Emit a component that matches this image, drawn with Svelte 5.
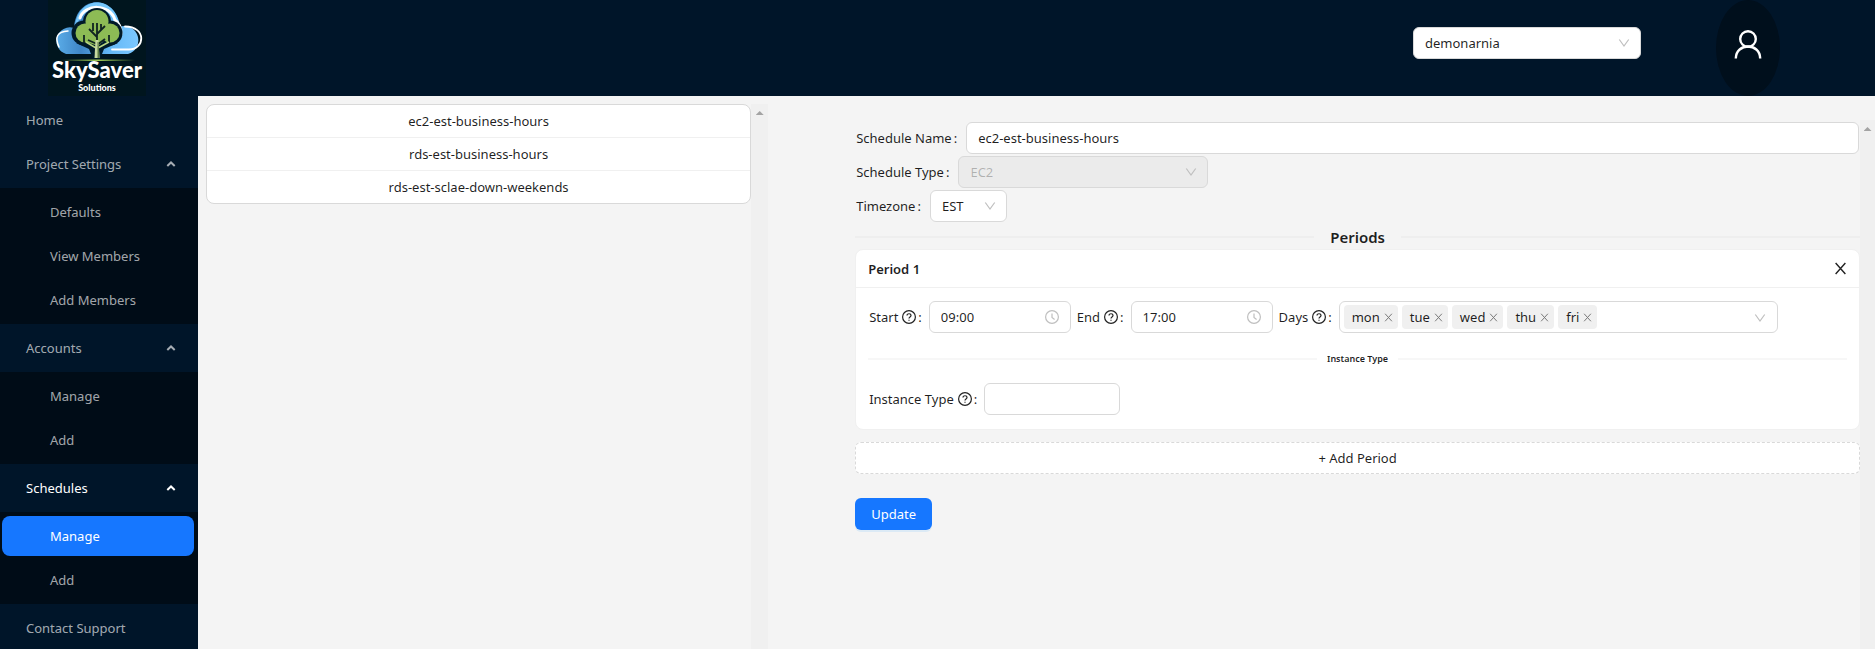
<script lang="ts">
	interface MenuItem {
		label: string;
		active?: boolean;
		children?: { label: string; active?: boolean }[];
	}

	const menu: MenuItem[] = [
		{ label: 'Home' },
		{
			label: 'Project Settings',
			children: [{ label: 'Defaults' }, { label: 'View Members' }, { label: 'Add Members' }]
		},
		{ label: 'Accounts', children: [{ label: 'Manage' }, { label: 'Add' }] },
		{
			label: 'Schedules',
			active: true,
			children: [{ label: 'Manage', active: true }, { label: 'Add' }]
		},
		{ label: 'Contact Support' }
	];

	const schedules = ['ec2-est-business-hours', 'rds-est-business-hours', 'rds-est-sclae-down-weekends'];

	let name = $state('ec2-est-business-hours');
	let start = $state('09:00');
	let end = $state('17:00');
	let instanceType = $state('');
	let days = $state(['mon', 'tue', 'wed', 'thu', 'fri']);

	function removeDay(day: string) {
		days = days.filter((d) => d !== day);
	}
</script>

{#snippet chevron()}
	<svg class="chevron" viewBox="0 0 12 12" aria-hidden="true"><path d="M1.3 2.5 6 9l4.7-6.5" /></svg>
{/snippet}

{#snippet help()}
	<svg class="help" viewBox="0 0 14 14" aria-hidden="true">
		<circle cx="7" cy="7" r="6.4" />
		<path d="M5 5.6c0-2.5 4-2.5 4 0 0 1.4-2 1.4-2 2.8" />
		<path d="M7 9.7v1.1" />
	</svg>
{/snippet}

{#snippet clock()}
	<svg class="clock" viewBox="0 0 14 14" aria-hidden="true">
		<circle cx="7" cy="7" r="6.4" />
		<path d="M7 3.5v4l2.6 1.9" />
	</svg>
{/snippet}

{#snippet cross()}
	<svg viewBox="0 0 12 12" aria-hidden="true"><path d="m1.5 1 9 10m0-10-9 10" /></svg>
{/snippet}

<div class="layout">
	<header>
		<a class="logo" href="#home" aria-label="SkySaver Solutions">
			<svg viewBox="0 0 98 96">
				<defs>
					<linearGradient id="sky" x1="0" y1="0" x2="1" y2="0">
						<stop offset="0" stop-color="#5aace8" />
						<stop offset="0.3" stop-color="#3f86c6" />
						<stop offset="0.65" stop-color="#64b8f6" />
						<stop offset="1" stop-color="#7cc8ff" />
					</linearGradient>
					<linearGradient id="ground" x1="0" y1="0" x2="1" y2="0">
						<stop offset="0" stop-color="#8fbe4e" stop-opacity="0" />
						<stop offset="0.5" stop-color="#a5cf57" />
						<stop offset="1" stop-color="#8fbe4e" stop-opacity="0" />
					</linearGradient>
				</defs>
				<rect width="98" height="96" fill="#00151e" />
				<path fill="url(#sky)" d="M18 54A13.5 13.5 0 1 1 26 28C28-6 68-6 72 26.5A14.3 14.3 0 1 1 80 54z" />
				<path fill="#74c6fb" d="M27 25C31-5 67-5 71 25L60 12H38z" />
				<g fill="none" stroke="#fff" stroke-linecap="round">
					<path stroke-width="1.5" d="M11 47q-7-15 9-16" />
					<path stroke-width="3" d="M32 18C36 4 62 3 67 20q6 4 6 14" />
					<path stroke-width="1.8" d="M77 26.5c22 0 20 23 4 23H64" />
				</g>
				<!-- outline behind the crown -->
				<g fill="#001a29">
					<circle cx="49" cy="22" r="14" />
					<circle cx="36" cy="33" r="12.5" />
					<circle cx="62" cy="33" r="12.5" />
					<path d="M28 43h42l-14 6-4 10h-7l-4-10z" />
				</g>
				<g fill="#8dbb55">
					<circle cx="49" cy="21.5" r="11.5" />
					<circle cx="37" cy="33" r="9.5" />
					<circle cx="62" cy="33" r="9.5" />
					<path d="M40 27h20v10l-10 9-12-4z" />
				</g>
				<g fill="none" stroke="#102421" stroke-width="1.8">
					<path d="M49 45V23m0 14-8-8m8 5 8-8M45 31v-8m8 7v-6M36 43v-8m25 8v-8M49 44l-9-4m9 5 8-6" />
				</g>
				<path fill="none" stroke="#bbd783" stroke-width="1.5" d="m38 42 10 6m13-6-11 6" />
				<path fill="#c6d8a0" d="M47.5 40h3l1 18h-5z" />
				<path fill="#5b7a42" d="M49.5 42h1l1 16h-2z" />
				<rect x="13" y="59.5" width="74" height="1.5" fill="url(#ground)" />
				<text class="brand" x="49" y="78" text-anchor="middle">SkySaver</text>
				<text class="tagline" x="49" y="91" text-anchor="middle">Solutions</text>
			</svg>
		</a>
		<div class="select project">
			<select aria-label="Project"><option>demonarnia</option></select>
			{@render chevron()}
		</div>
		<button class="avatar" aria-label="Account">
			<svg viewBox="0 0 32 32" aria-hidden="true">
				<circle cx="16" cy="10" r="7.8" />
				<path d="M3.8 29.5C4 13.5 28 13.5 28.2 29.5" />
			</svg>
		</button>
	</header>

	<nav>
		<ul class="menu">
			{#each menu as item}
				<li>
					{#if item.children}
						<button class="item" class:parent-active={item.active}>
							{item.label}
							<svg viewBox="0 0 10 6" aria-hidden="true"><path d="m1.3 5 3.7-3.5L8.7 5" /></svg>
						</button>
						<ul class="submenu">
							{#each item.children as child}
								<li><a class="item" class:active={child.active} href="#menu">{child.label}</a></li>
							{/each}
						</ul>
					{:else}
						<a class="item" href="#menu">{item.label}</a>
					{/if}
				</li>
			{/each}
		</ul>
	</nav>

	<main>
		<section class="list-pane">
			<ul class="schedules">
				{#each schedules as schedule}
					<li>{schedule}</li>
				{/each}
			</ul>
			<div class="scrollbar"></div>
		</section>

		<section class="form-pane">
			<form onsubmit={(e) => e.preventDefault()}>
				<div class="row">
					<label for="name">Schedule Name<span class="colon">:</span></label>
					<input id="name" class="grow" type="text" bind:value={name} />
				</div>
				<div class="row">
					<label for="type">Schedule Type<span class="colon">:</span></label>
					<div class="select type">
						<select id="type" disabled><option>EC2</option></select>
						{@render chevron()}
					</div>
				</div>
				<div class="row">
					<label for="timezone">Timezone<span class="colon">:</span></label>
					<div class="select timezone">
						<select id="timezone"><option>EST</option></select>
						{@render chevron()}
					</div>
				</div>

				<h2 class="divider">Periods</h2>

				<div class="card">
					<div class="card-head">
						<h3>Period 1</h3>
						<button class="close" type="button" aria-label="Remove period">{@render cross()}</button>
					</div>
					<div class="card-body">
						<div class="fields">
							<div class="field">
								<label for="start">Start {@render help()}<span class="colon">:</span></label>
								<div class="time">
									<input id="start" type="text" bind:value={start} />
									{@render clock()}
								</div>
							</div>
							<div class="field">
								<label for="end">End {@render help()}<span class="colon">:</span></label>
								<div class="time">
									<input id="end" type="text" bind:value={end} />
									{@render clock()}
								</div>
							</div>
							<div class="field">
								<label for="days">Days {@render help()}<span class="colon">:</span></label>
								<div class="tags">
									{#each days as day (day)}
										<span class="tag">
											{day}
											<button type="button" aria-label="Remove {day}" onclick={() => removeDay(day)}>
												{@render cross()}
											</button>
										</span>
									{/each}
									<input id="days" type="text" role="combobox" aria-expanded="false" aria-controls="days" />
									{@render chevron()}
								</div>
							</div>
						</div>
						<h4 class="divider small">Instance Type</h4>
						<div class="field">
							<label for="instance">Instance Type {@render help()}<span class="colon">:</span></label>
							<input id="instance" class="instance" type="text" bind:value={instanceType} />
						</div>
					</div>
				</div>

				<button class="add" type="button">+ Add Period</button>
				<button class="update" type="submit">Update</button>
			</form>
			<div class="scrollbar"></div>
		</section>
	</main>
</div>

<style>
	:global(body) {
		margin: 0;
		background: #f4f4f4;
	}

	.layout {
		display: grid;
		grid-template: 96px 1fr / 198px 1fr;
		height: 100vh;
		overflow: hidden;
		font: 13px/22px "Segoe UI", "Noto Sans", sans-serif;
		color: rgba(0, 0, 0, 0.88);
	}

	.layout * {
		box-sizing: border-box;
	}

	ul {
		list-style: none;
		margin: 0;
		padding: 0;
	}

	button,
	input,
	select {
		font: inherit;
		color: inherit;
	}

	button {
		border: 0;
		padding: 0;
		background: none;
		cursor: pointer;
	}

	svg {
		display: block;
		fill: none;
		flex: none;
	}

	header {
		grid-column: 1 / -1;
		display: flex;
		align-items: center;
		padding: 0 95px 0 48px;
		background: #001529;
	}

	.logo {
		margin-right: auto;
	}

	.logo svg {
		width: 98px;
		height: 96px;
	}

	.brand,
	.tagline {
		font-family: Lato, sans-serif;
		font-weight: 900;
		fill: #fff;
	}

	.brand { font-size: 22px; }
	.tagline { font-size: 9px; }

	.project {
		width: 228px;
		margin: 0 75px 10px 0;
	}

	.avatar {
		display: grid;
		place-items: center;
		width: 64px;
		height: 96px;
		border-radius: 50%;
		background: #000f1c;
	}

	.avatar svg {
		width: 32px;
		height: 32px;
		margin-bottom: 6px;
		stroke: #fff;
		stroke-width: 2.4;
	}

	nav {
		background: #001529;
		color: rgba(255, 255, 255, 0.65);
		min-height: 0;
	}

	.menu {
		padding-top: 4px;
	}

	.item {
		display: flex;
		align-items: center;
		justify-content: space-between;
		width: calc(100% - 6px);
		height: 40px;
		margin: 0 4px 4px 2px;
		padding: 0 18px 0 24px;
		border-radius: 8px;
		color: inherit;
		text-decoration: none;
	}

	.item svg {
		width: 10px;
		height: 6px;
		stroke: currentColor;
		stroke-width: 2;
	}

	.submenu {
		margin-bottom: 4px;
		padding-top: 4px;
		background: #000c17;
		display: flow-root;
	}

	.submenu .item { padding-left: 48px; }
	.item.parent-active { color: #fff; }

	.item.active {
		background: #1677ff;
		color: #fff;
	}

	main {
		display: grid;
		grid-template-columns: 34% 1fr;
		background: #f4f4f4;
		min-width: 0;
	}

	.list-pane {
		display: flex;
		padding: 8px 0 0 8px;
	}

	.schedules {
		flex: 1;
		align-self: flex-start;
		border: 1px solid #d9d9d9;
		border-radius: 8px;
		background: #fff;
		text-align: center;
	}

	.schedules li {
		padding: 5px 16px;
	}

	.schedules li + li {
		border-top: 1px solid #f0f0f0;
	}

	.scrollbar {
		flex: none;
		width: 17px;
		padding-top: 7px;
		background: #f0f0f0;
	}

	.scrollbar::before {
		content: '';
		display: block;
		width: 8px;
		height: 4px;
		margin: 0 auto;
		background: #a3a3a3;
		clip-path: polygon(50% 0, 100% 100%, 0 100%);
	}

	.form-pane {
		display: flex;
		padding: 24px 0 0 87px;
		min-width: 0;
	}

	.form-pane .scrollbar { width: 15px; }

	form {
		flex: 1;
		min-width: 0;
		padding-top: 2px;
	}

	.row {
		display: flex;
		align-items: center;
		margin: 0 1px 2px;
	}

	label {
		display: flex;
		align-items: center;
		flex: none;
	}

	.colon {
		margin: 0 9px 0 2px;
	}

	.help + .colon { margin-right: 7px; }

	input,
	select {
		height: 32px;
		min-width: 0;
		padding: 4px 11px;
		border: 1px solid #d9d9d9;
		border-radius: 6px;
		background: #fff;
		outline: none;
	}

	.grow { flex: 1; }

	.select,
	.time {
		position: relative;
	}

	.select select {
		display: block;
		width: 100%;
		appearance: none;
	}

	.select select:disabled {
		background: #ebebeb;
		color: rgba(0, 0, 0, 0.25);
		opacity: 1;
	}

	.type { width: 250px; }
	.timezone { width: 77px; }

	.chevron {
		position: absolute;
		top: 10px;
		right: 11px;
		width: 12px;
		height: 12px;
		stroke: #bfbfbf;
		stroke-width: 1.2;
		pointer-events: none;
	}

	.divider {
		display: flex;
		align-items: center;
		gap: 16px;
		margin: 3px 0 0;
		font-size: 15px;
		font-weight: 600;
		line-height: 24px;
	}

	.divider::before,
	.divider::after {
		content: '';
		flex: 1;
		height: 2px;
		background: #eee;
	}

	.card {
		margin-bottom: 12px;
		border: 1px solid #f0f0f0;
		border-radius: 8px;
		background: #fff;
	}

	.card-head {
		display: flex;
		align-items: center;
		justify-content: space-between;
		height: 38px;
		padding: 0 12px;
		border-bottom: 1px solid #f0f0f0;
	}

	h3 {
		margin: 0;
		font-size: 13px;
		font-weight: 600;
	}

	.close svg {
		width: 13px;
		height: 13px;
		stroke: #222;
		stroke-width: 1.3;
	}

	.card-body {
		padding: 13px 12px 14px;
	}

	.fields {
		display: flex;
		gap: 6px;
	}

	.field {
		display: flex;
		align-items: center;
		padding-left: 1px;
	}

	.field + .field { padding-left: 0; }

	.help,
	.clock {
		width: 14px;
		height: 14px;
		stroke: #222;
		stroke-width: 1.2;
	}

	.help { margin-left: 4px; }

	.time input {
		display: block;
		width: 142px;
	}

	.clock {
		position: absolute;
		top: 9px;
		right: 12px;
		stroke: #bfbfbf;
	}

	.tags {
		position: relative;
		display: flex;
		align-items: center;
		gap: 4px;
		width: 439px;
		height: 32px;
		padding: 0 4px;
		border: 1px solid #d9d9d9;
		border-radius: 6px;
	}

	.tags input {
		flex: 1;
		height: 24px;
		padding: 0;
		border: 0;
	}

	.tag {
		display: flex;
		align-items: center;
		gap: 4px;
		height: 24px;
		padding: 0 5px 0 8px;
		border-radius: 4px;
		background: #f0f0f0;
	}

	.tag svg {
		width: 9px;
		height: 9px;
		stroke: #777;
		stroke-width: 1.3;
	}

	.divider.small {
		gap: 10px;
		margin: 16px 0 14px;
		font-size: 9px;
		line-height: 20px;
	}

	.small::before,
	.small::after {
		background: #f7f7f7;
	}

	.instance { width: 136px; }

	.add {
		width: 100%;
		height: 32px;
		border: 1px dashed #d9d9d9;
		border-radius: 6px;
		background: #fff;
	}

	.update {
		display: block;
		height: 32px;
		margin-top: 24px;
		padding: 0 16px;
		border-radius: 6px;
		background: #1677ff;
		color: #fff;
		box-shadow: 0 2px 0 rgba(5, 145, 255, 0.1);
	}
</style>
